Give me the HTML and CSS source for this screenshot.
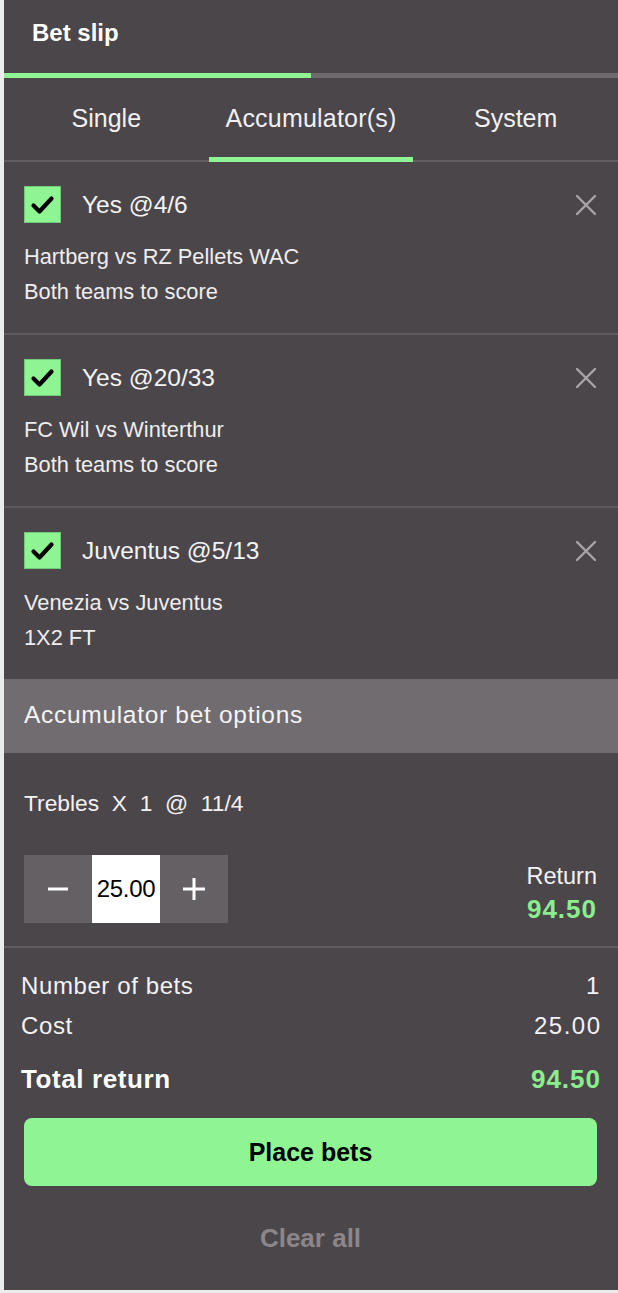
FILE: index.html
```html
<!DOCTYPE html>
<html lang="en">
<head>
<meta charset="utf-8">
<title>Bet slip</title>
<link rel="stylesheet" href="styles.css">
</head>
<body>
<div class="slip">
  <header class="head"><h1 class="head-title">Bet slip</h1></header>
  <div class="progress"><div class="progress-fill" style="width:50%"></div></div>
  <nav class="tabs">
    <div class="tab">Single</div>
    <div class="tab tab-active">Accumulator(s)</div>
    <div class="tab">System</div>
  </nav>

  <ul class="legs">
    <li class="leg">
      <div class="leg-top">
        <span class="check"><svg viewBox="0 0 37 37" width="37" height="37"><path d="M9.5 19.5 L15.5 25.5 L27.5 12.5" fill="none" stroke="#000" stroke-width="4.2" stroke-linecap="round" stroke-linejoin="round"/></svg></span>
        <span class="leg-title">Yes @4/6</span>
        <svg class="close" viewBox="0 0 22 22" width="22" height="22"><path d="M2 2 L20 20 M20 2 L2 20" stroke="#a9a4a7" stroke-width="2.4" stroke-linecap="round"/></svg>
      </div>
      <div class="leg-meta">Hartberg vs RZ Pellets WAC</div>
      <div class="leg-meta">Both teams to score</div>
    </li>
    <li class="leg">
      <div class="leg-top">
        <span class="check"><svg viewBox="0 0 37 37" width="37" height="37"><path d="M9.5 19.5 L15.5 25.5 L27.5 12.5" fill="none" stroke="#000" stroke-width="4.2" stroke-linecap="round" stroke-linejoin="round"/></svg></span>
        <span class="leg-title">Yes @20/33</span>
        <svg class="close" viewBox="0 0 22 22" width="22" height="22"><path d="M2 2 L20 20 M20 2 L2 20" stroke="#a9a4a7" stroke-width="2.4" stroke-linecap="round"/></svg>
      </div>
      <div class="leg-meta">FC Wil vs Winterthur</div>
      <div class="leg-meta">Both teams to score</div>
    </li>
    <li class="leg">
      <div class="leg-top">
        <span class="check"><svg viewBox="0 0 37 37" width="37" height="37"><path d="M9.5 19.5 L15.5 25.5 L27.5 12.5" fill="none" stroke="#000" stroke-width="4.2" stroke-linecap="round" stroke-linejoin="round"/></svg></span>
        <span class="leg-title">Juventus @5/13</span>
        <svg class="close" viewBox="0 0 22 22" width="22" height="22"><path d="M2 2 L20 20 M20 2 L2 20" stroke="#a9a4a7" stroke-width="2.4" stroke-linecap="round"/></svg>
      </div>
      <div class="leg-meta">Venezia vs Juventus</div>
      <div class="leg-meta">1X2 FT</div>
    </li>
  </ul>

  <div class="band">Accumulator bet options</div>

  <section class="acc">
    <div class="acc-label">Trebles&nbsp; X &nbsp;1 &nbsp;@ &nbsp;11/4</div>
    <div class="acc-row">
      <div class="stepper">
        <span class="step-btn"><svg viewBox="0 0 20 20" width="20" height="20"><path d="M0 10 H20" stroke="#fff" stroke-width="3"/></svg></span>
        <span class="step-input">25.00</span>
        <span class="step-btn"><svg viewBox="0 0 22 22" width="22" height="22"><path d="M0 11 H22 M11 0 V22" stroke="#fff" stroke-width="3"/></svg></span>
      </div>
      <div class="ret">
        <div class="ret-label">Return</div>
        <div class="ret-value">94.50</div>
      </div>
    </div>
  </section>

  <section class="summary">
    <div class="sum-row"><span>Number of bets</span><span>1</span></div>
    <div class="sum-row"><span>Cost</span><span class="num">25.00</span></div>
    <div class="sum-row sum-total"><span>Total return</span><span class="green">94.50</span></div>
    <button class="place">Place bets</button>
    <div class="clear">Clear all</div>
  </section>
</div>
</body>
</html>
```

FILE: styles.css
```css
* { box-sizing: border-box; }
html, body { margin: 0; padding: 0; }
body {
  background: #ececec;
  font-family: "Liberation Sans", Arial, sans-serif;
  color: #f4f2f3;
}
.slip {
  margin-left: 4px;
  width: 614px;
  height: 1290px;
  background: #4b464a;
  display: flex;
  flex-direction: column;
}
.head {
  height: 73px;
  padding: 18px 0 0 28px;
}
.head-title {
  margin: 0;
  font-size: 24px;
  font-weight: 700;
  line-height: 30px;
  color: #fff;
}
.progress {
  height: 5px;
  background: #6f6a6d;
}
.progress-fill {
  height: 100%;
  background: #8ef592;
}
.tabs {
  display: flex;
  height: 84px;
}
.tab {
  flex: 1;
  display: flex;
  align-items: center;
  justify-content: center;
  padding-bottom: 4px;
  font-size: 25px;
  color: #f2f0f1;
  box-shadow: inset 0 -2px 0 #625d60;
}
.tab-active {
  box-shadow: inset 0 -5px 0 #8ef592;
  letter-spacing: 0.2px;
}
.legs {
  list-style: none;
  margin: 0;
  padding: 0;
}
.leg {
  height: 173px;
  padding: 24px 20px 0 20px;
  border-bottom: 2px solid #5f5a5d;
}
.leg:last-child {
  border-bottom: none;
  height: 171px;
}
.leg-top {
  display: flex;
  align-items: center;
  height: 37px;
  margin-bottom: 16px;
}
.check {
  width: 37px;
  height: 37px;
  background: #8ef592;
  border: 1px solid #72c976;
  display: flex;
  align-items: center;
  justify-content: center;
}
.check svg { display: block; margin: -1px; }
.leg-title {
  margin-left: 21px;
  flex: 1;
  font-size: 24.5px;
  color: #f4f2f3;
}
.close {
  margin-right: 1px;
}
.leg-meta {
  font-size: 21.8px;
  line-height: 35px;
  color: #efeded;
}
.band {
  height: 74px;
  background: #716c6f;
  display: flex;
  align-items: center;
  padding-left: 20px;
  font-size: 24.5px;
  letter-spacing: 0.7px;
  color: #f6f4f5;
  padding-bottom: 2px;
}
.acc {
  height: 195px;
  padding: 35px 21px 0 20px;
  border-bottom: 2px solid #625d60;
}
.acc-label {
  font-size: 22.8px;
  line-height: 30px;
  color: #f4f2f3;
}
.acc-row {
  margin-top: 37px;
  display: flex;
  justify-content: space-between;
  align-items: flex-end;
}
.stepper {
  display: flex;
  height: 68px;
}
.step-btn {
  width: 68px;
  height: 68px;
  background: #656063;
  display: flex;
  align-items: center;
  justify-content: center;
}
.step-input {
  width: 68px;
  height: 68px;
  background: #fff;
  color: #000;
  font-size: 24px;
  letter-spacing: -0.3px;
  display: flex;
  align-items: center;
  justify-content: center;
}
.ret {
  text-align: right;
}
.ret-label {
  font-size: 23.5px;
  line-height: 28px;
  color: #f4f2f3;
}
.ret-value {
  margin-top: 5px;
  font-size: 26px;
  line-height: 28px;
  font-weight: 700;
  color: #8aee8e;
  letter-spacing: 1px;
}
.summary {
  flex: 1;
  padding: 18px 18px 0 17px;
  display: flex;
  flex-direction: column;
}
.sum-row {
  display: flex;
  justify-content: space-between;
  align-items: center;
  height: 40px;
  font-size: 24px;
  letter-spacing: 0.6px;
  color: #f4f2f3;
}
.num { letter-spacing: 1.5px; margin-right: -1.5px; }
.sum-total {
  margin-top: 13px;
  font-weight: 700;
  font-size: 26px;
  letter-spacing: 0.6px;
  color: #fff;
}
.green { color: #8aee8e; letter-spacing: 1px; margin-right: -1px; }
.place {
  margin: 19px 3px 0 3px;
  height: 68px;
  border: none;
  border-radius: 8px;
  background: #8ef592;
  color: #000;
  font-family: "Liberation Sans", Arial, sans-serif;
  font-size: 25px;
  font-weight: 700;
}
.clear {
  margin-top: 32px;
  height: 40px;
  display: flex;
  align-items: center;
  justify-content: center;
  font-size: 26px;
  font-weight: 700;
  color: #8b8689;
}
```
